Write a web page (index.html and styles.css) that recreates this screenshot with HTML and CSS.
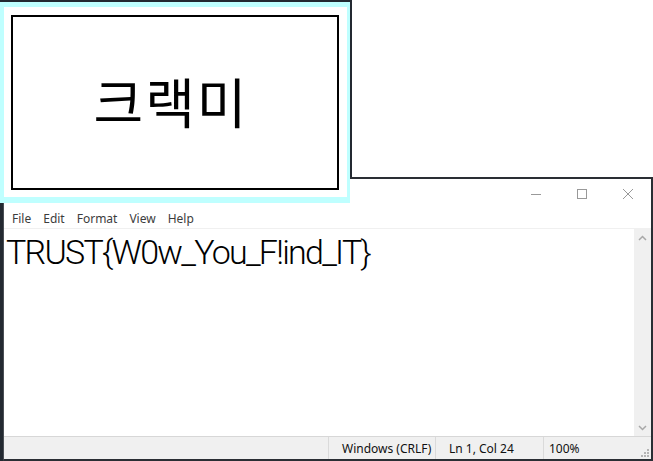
FILE: index.html
```html
<!DOCTYPE html>
<html lang="ko">
<head>
<meta charset="utf-8">
<title>Notepad</title>
<link rel="stylesheet" href="styles.css">
</head>
<body>
<div class="desk">
  <div class="backdrop"></div>

  <div class="notepad">
    <div class="titlebar">
      <div class="caption-btn">
        <svg width="12" height="12" viewBox="0 0 12 12"><path d="M1 6.5h10" stroke="#999" stroke-width="1"/></svg>
      </div>
      <div class="caption-btn">
        <svg width="12" height="12" viewBox="0 0 12 12"><rect x="1.5" y="1.5" width="9" height="9" fill="none" stroke="#999" stroke-width="1"/></svg>
      </div>
      <div class="caption-btn">
        <svg width="12" height="12" viewBox="0 0 12 12"><path d="M1 1L11 11M11 1L1 11" stroke="#999" stroke-width="1"/></svg>
      </div>
    </div>
    <div class="menubar">
      <span class="menu-item">File</span>
      <span class="menu-item">Edit</span>
      <span class="menu-item">Format</span>
      <span class="menu-item">View</span>
      <span class="menu-item">Help</span>
    </div>
    <div class="editor">
      <div class="text-area">TRUST{W0w_You_F!ind_IT}</div>
      <div class="scrollbar">
        <svg class="arrow" width="9" height="6" viewBox="0 0 9 6"><path d="M1 5L4.5 1.5L8 5" fill="none" stroke="#a8a8a8" stroke-width="1.5"/></svg>
        <svg class="arrow" width="9" height="6" viewBox="0 0 9 6"><path d="M1 1L4.5 4.5L8 1" fill="none" stroke="#a8a8a8" stroke-width="1.5"/></svg>
      </div>
    </div>
    <div class="statusbar">
      <div class="cell cell-empty"></div>
      <div class="cell cell-eol">Windows (CRLF)</div>
      <div class="cell cell-pos">Ln 1, Col 24</div>
      <div class="cell cell-zoom">100%</div>
      <svg class="grip" width="10" height="10" viewBox="0 0 10 10" fill="#b4b4b4">
        <rect x="7" y="1" width="2" height="2"/>
        <rect x="4" y="4" width="2" height="2"/><rect x="7" y="4" width="2" height="2"/>
        <rect x="1" y="7" width="2" height="2"/><rect x="4" y="7" width="2" height="2"/><rect x="7" y="7" width="2" height="2"/>
      </svg>
    </div>
  </div>

  <div class="popup">
    <div class="popup-inner">
      <div class="popup-box">크랙미</div>
    </div>
  </div>
</div>
</body>
</html>
```
FILE: styles.css
```css
html, body {
  margin: 0;
  padding: 0;
}
body {
  width: 653px;
  height: 461px;
  overflow: hidden;
  background: #ffffff;
  font-family: "Noto Sans", "Open Sans", sans-serif;
}
.desk {
  position: relative;
  width: 653px;
  height: 461px;
}
.backdrop {
  position: absolute;
  left: 0;
  top: 0;
  width: 352px;
  height: 461px;
  background: #232931;
}
.notepad {
  position: absolute;
  left: 3px;
  top: 177px;
  width: 650px;
  height: 284px;
  box-sizing: border-box;
  border-top: 2px solid #2a2e34;
  border-right: 2px solid #2a2e34;
  border-bottom: 2px solid #2a2e34;
  border-left: 1px solid #4a4f55;
  background: #ffffff;
  display: flex;
  flex-direction: column;
}
.titlebar {
  height: 31px;
  display: flex;
  justify-content: flex-end;
  align-items: center;
  flex: none;
}
.caption-btn {
  width: 46px;
  height: 31px;
  display: flex;
  align-items: center;
  justify-content: center;
}
.caption-btn svg {
  display: block;
  margin-top: -2px;
}
.menubar {
  height: 18px;
  flex: none;
  display: flex;
  align-items: center;
  padding-left: 8px;
  border-bottom: 1px solid #f0f0f0;
  font-size: 12px;
  color: #3c3c3c;
}
.menu-item {
  padding: 0 7px 0 0;
  margin-right: 5px;
  line-height: 18px;
}
.editor {
  flex: 1;
  display: flex;
  min-height: 0;
}
.text-area {
  flex: 1;
  padding: 0 0 0 2px;
  font-family: "Roboto", "Noto Sans", sans-serif;
  font-size: 34px;
  font-weight: 300;
  letter-spacing: -1.75px;
  line-height: 46px;
  color: #000;
  white-space: nowrap;
}
.scrollbar {
  width: 17px;
  background: #f0f0f0;
  display: flex;
  flex-direction: column;
  justify-content: space-between;
  align-items: center;
  padding: 6px 0 5px;
}
.arrow {
  display: block;
}
.statusbar {
  height: 22px;
  flex: none;
  background: #f0f0f0;
  border-top: 1px solid #d7d7d7;
  display: flex;
  align-items: stretch;
  font-size: 12px;
  color: #111;
  position: relative;
}
.cell {
  display: flex;
  align-items: center;
  border-left: 1px solid #dadada;
  box-sizing: border-box;
}
.cell-empty {
  width: 324px;
  border-left: none;
}
.cell-eol {
  width: 107px;
  padding-left: 13px;
}
.cell-pos {
  width: 108px;
  padding-left: 13px;
}
.cell-zoom {
  flex: 1;
  padding-left: 5px;
}
.grip {
  position: absolute;
  right: 1px;
  bottom: 1px;
}
.popup {
  position: absolute;
  left: 0;
  top: 2px;
  width: 350px;
  height: 201px;
  box-sizing: border-box;
  background: #bfffff;
  padding: 5px 3px 6px 4px;
}
.popup-inner {
  background: #ffffff;
  height: 100%;
  box-sizing: border-box;
  padding: 8px 8px 7px 7px;
}
.popup-box {
  height: 100%;
  box-sizing: border-box;
  border: 2px solid #000;
  display: flex;
  align-items: center;
  justify-content: center;
  font-family: "Noto Sans CJK KR", sans-serif;
  font-size: 54px;
  font-weight: 400;
  letter-spacing: 2px;
  color: #000;
  padding-right: 8px;
  padding-bottom: 4px;
}
```
